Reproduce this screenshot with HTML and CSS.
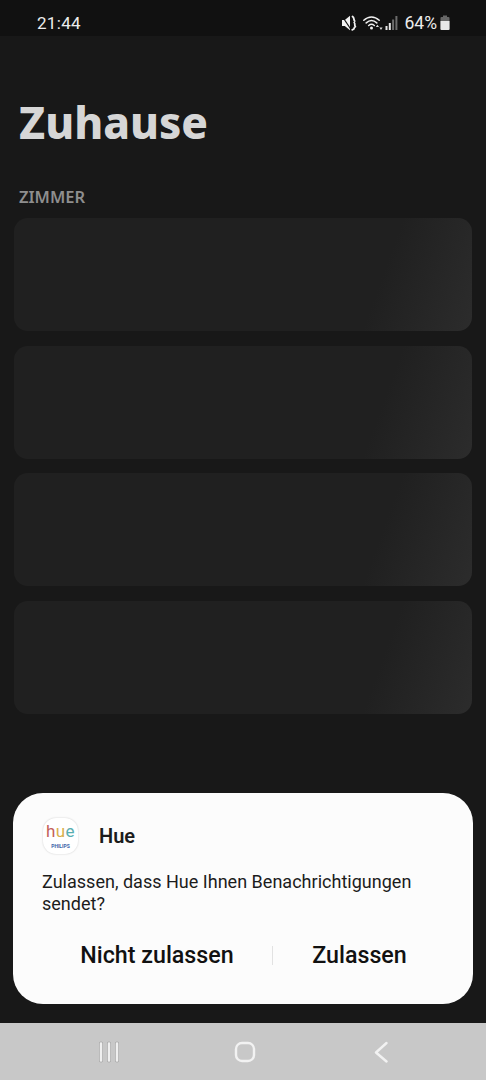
FILE: index.html
```html
<!DOCTYPE html>
<html lang="de">
<head>
    <meta charset="UTF-8">
    <meta name="viewport" content="width=device-width, initial-scale=1.0">
    <title>Zuhause</title>
    <link rel="stylesheet" href="styles.css">
</head>
<body>
    <div class="phone">
        <!-- Statusleiste -->
        <div class="status-bar">
            <span class="clock">21:44</span>
            <div class="status-icons">
                <svg class="icon-mute" width="16" height="16" viewBox="0 0 16 16">
                    <path d="M1 5h2.800L9 .8v14.400L3.800 11H1z" fill="#f2f2f2"/>
                    <path d="M1 1l9 13.500" stroke="#111" stroke-width="1.200"/>
                    <path d="M11.500 1.500c2.200 1.500.8 3 2.200 4.500M13.200 7.500c1.400 1.500-.2 2.800 1.200 4.200M11.200 14.800c1.500-.5 2.200-1.200 2.200-2.400" stroke="#f2f2f2" stroke-width="1.800" fill="none" stroke-linecap="round"/>
                </svg>
                <svg class="icon-wifi" width="20" height="16" viewBox="0 0 20 16">
                    <path d="M.8 5.200C5.500.8 11.500.8 16.200 5.200M3.200 7.900C6.500 4.900 10.500 4.900 13.800 7.900M5.700 10.500c1.800-1.500 3.800-1.500 5.600 0" stroke="#efefef" stroke-width="1.500" fill="none" stroke-linecap="round"/>
                    <circle cx="8.500" cy="13" r="1.500" fill="#efefef"/>
                    <path d="M12.800 12l1.600-2.300L16 12zM16.400 12.600h3.200l-1.600 2.300z" fill="#dcdcdc"/>
                </svg>
                <svg class="icon-signal" width="14" height="16" viewBox="0 0 14 16">
                    <rect x="0.500" y="11" width="2" height="4" fill="#e8e8e8"/>
                    <rect x="3.800" y="8" width="2" height="7" fill="#e8e8e8"/>
                    <rect x="7.100" y="4.500" width="2" height="10.500" fill="#6c6c6c"/>
                    <rect x="10.400" y="1" width="2" height="14" fill="#6c6c6c"/>
                </svg>
                <span class="battery-text">64%</span>
                <svg class="icon-battery" width="10" height="15" viewBox="0 0 10 15">
                    <path d="M3 .5h4V2h1.500a1 1 0 0 1 1 1v11a1 1 0 0 1-1 1h-7a1 1 0 0 1-1-1V3a1 1 0 0 1 1-1H3z" fill="#666"/>
                    <path d="M.5 6h9v8a1 1 0 0 1-1 1h-7a1 1 0 0 1-1-1z" fill="#e8e8e8"/>
                </svg>
            </div>
        </div>

        <!-- Inhalt -->
        <div class="content">
            <h1 class="title">Zuhause</h1>
            <div class="section-label">ZIMMER</div>
            <div class="rooms">
                <div class="room"></div>
                <div class="room"></div>
                <div class="room"></div>
                <div class="room"></div>
            </div>

            <!-- Dialog -->
            <div class="dialog">
                <div class="dialog-head">
                    <div class="app-icon">
                        <span class="hue-logo"><span class="c1">h</span><span class="c2">u</span><span class="c3">e</span></span>
                        <span class="philips">PHILIPS</span>
                    </div>
                    <span class="app-name">Hue</span>
                </div>
                <p class="dialog-text">Zulassen, dass Hue Ihnen Benachrichtigungen sendet?</p>
                <div class="dialog-actions">
                    <button class="action">Nicht zulassen</button>
                    <span class="divider"></span>
                    <button class="action">Zulassen</button>
                </div>
            </div>
        </div>

        <!-- Navigationsleiste -->
        <div class="nav-bar">
            <svg width="22" height="22" viewBox="0 0 22 22">
                <path d="M3 2.500v17M11 2.500v17M19 2.500v17" stroke="#a4a4a4" stroke-width="4" stroke-linecap="round"/>
                <path d="M3 2.500v17M11 2.500v17M19 2.500v17" stroke="#f0f0f0" stroke-width="2.600" stroke-linecap="round"/>
            </svg>
            <svg width="22" height="22" viewBox="0 0 22 22">
                <rect x="2" y="2" width="18" height="18" rx="6" fill="none" stroke="#f2f2f2" stroke-width="2.400"/>
            </svg>
            <svg width="22" height="22" viewBox="0 0 22 22">
                <path d="M16.500 2L6 11.500 16.500 20.500" fill="none" stroke="#f2f2f2" stroke-width="2.400" stroke-linecap="round" stroke-linejoin="round"/>
            </svg>
        </div>
    </div>
</body>
</html>
```

FILE: styles.css
```css
/* Grundlayout */
body {
    margin: 0;
    background-color: #181818;
    font-family: Roboto, "Liberation Sans", sans-serif;
}

.phone {
    display: flex;
    flex-direction: column;
    height: 1080px;
    overflow: hidden;
}

/* Statusleiste */
.status-bar {
    display: flex;
    justify-content: space-between;
    align-items: center;
    flex: 0 0 36px;
    box-sizing: border-box;
    padding: 9px 36px 0 37px;
    background-color: #111111;
    color: #ececec;
    font-size: 17.500px;
}

.clock {
    font-size: 17px;
    letter-spacing: 0.3px;
}

.status-icons {
    display: flex;
    align-items: center;
}

.icon-wifi {
    margin-left: 6px;
}

.icon-signal {
    margin-left: 2px;
}

.battery-text {
    margin-left: 6px;
}

.icon-battery {
    margin-left: 3px;
}

/* Inhalt */
.content {
    position: relative;
    flex: 1;
    padding: 0 14px;
}

.title {
    margin: 56px 0 0 5px;
    color: #d6d6d6;
    font-family: "Noto Sans", sans-serif;
    font-size: 44px;
    font-weight: 800;
    line-height: 60px;
}

.section-label {
    margin: 35px 0 0 5px;
    color: #8e8e8e;
    font-family: "Noto Sans", sans-serif;
    font-size: 16.500px;
    font-weight: 600;
    line-height: 20px;
}

.rooms {
    display: flex;
    flex-direction: column;
    gap: 14.670px;
    margin-top: 11px;
}

.room {
    height: 113px;
    border-radius: 14px;
    background: linear-gradient(110deg, #202020 78%, #2c2c2c 100%);
}

/* Dialog */
.dialog {
    position: absolute;
    left: 13px;
    right: 13px;
    bottom: 19px;
    height: 211px;
    box-sizing: border-box;
    padding: 25px 27px 0 29px;
    border-radius: 30px;
    background-color: #fcfcfc;
    color: #1c1c1c;
}

.dialog-head {
    display: flex;
    align-items: center;
    gap: 21px;
    padding-left: 1px;
}

.app-icon {
    display: flex;
    flex-direction: column;
    align-items: center;
    width: 35px;
    height: 36px;
    border-radius: 13px;
    background-color: #ffffff;
    box-shadow: 0 0 2px rgba(0, 0, 0, 0.2);
}

.hue-logo {
    margin-top: 5px;
    font-size: 17px;
    letter-spacing: 0.4px;
    line-height: 17px;
}

.c1 { color: #c4605a; }
.c2 { color: #d9b04c; }
.c3 { color: #58aeb0; }

.philips {
    margin-top: 3px;
    color: #3b62a8;
    font-size: 5px;
    font-weight: 700;
    line-height: 6px;
}

.app-name {
    font-size: 20px;
    font-weight: 600;
}

.dialog-text {
    margin: 17px 0 0;
    font-size: 18.050px;
    line-height: 21.500px;
}

.dialog-actions {
    display: grid;
    grid-template-columns: 230px 1px 1fr;
    align-items: center;
    margin-top: 26px;
}

.action {
    padding: 0;
    border: none;
    background: none;
    color: #111111;
    font-family: inherit;
    font-size: 23.250px;
    font-weight: 500;
    line-height: 30px;
}

.divider {
    height: 19px;
    background-color: #e2e2e2;
}

/* Navigationsleiste */
.nav-bar {
    display: grid;
    grid-template-columns: repeat(3, 136px);
    justify-content: center;
    justify-items: center;
    align-items: center;
    flex: 0 0 57px;
    padding-left: 4px;
    background-color: #c8c8c8;
}
```
